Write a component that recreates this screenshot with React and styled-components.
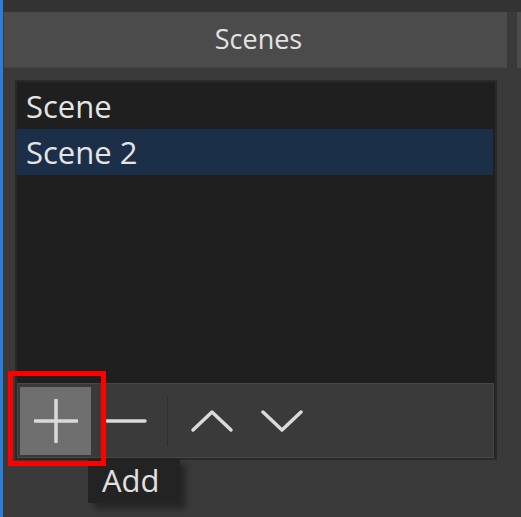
import React from 'react';
import styled, { createGlobalStyle } from 'styled-components';

const GlobalStyle = createGlobalStyle`
    body {
        margin: 0;
        background-color: #3a3a3a;
        font-family: "Open Sans", "Noto Sans", sans-serif;
        overflow: hidden;
    }
`;

const Window = styled.div`
    display: flex;
    width: 521px;
    height: 517px;
    background-color: #3a3a3a;
`;

const FocusEdge = styled.div`
    width: 3px;
    background-color: #2b7fd6;
    flex-shrink: 0;
`;

const Dock = styled.div`
    flex: 1;
    display: flex;
    flex-direction: column;
    padding-left: 1px;
`;

const TopStrip = styled.div`
    height: 12px;
    background-color: #333333;
    margin-left: -1px;
`;

const HeaderRow = styled.div`
    display: flex;
    gap: 10px;
    height: 56px;
`;

const DockTitle = styled.div`
    width: 503px;
    flex-shrink: 0;
    background-color: #4b4b4b;
    border-bottom: 1px solid #444;
    box-sizing: border-box;
    display: flex;
    align-items: center;
    justify-content: center;
    color: #e2e2e2;
    font-size: 27px;
    padding: 0 0 3px 6px;
`;

const NextTitle = styled.div`
    flex: 1;
    background-color: #4b4b4b;
`;

const Body = styled.div`
    padding: 12px 0 0 11px;
`;

const ListFrame = styled.div`
    width: 482px;
    height: 380px;
    box-sizing: border-box;
    border: 2px solid #2a2a2a;
    background-color: #1f1f1f;
    display: flex;
    flex-direction: column;
`;

const SceneList = styled.div`
    display: flex;
    flex-direction: column;
    padding-top: 1px;
`;

const SceneRow = styled.div`
    height: 46px;
    margin-right: 2px;
    padding-left: 9px;
    display: flex;
    align-items: center;
    font-size: 31px;
    color: #e4e4e4;
    background-color: ${p => (p.$selected ? '#1b3048' : 'transparent')};
`;

const Toolbar = styled.div`
    margin-top: auto;
    margin-right: 1px;
    height: 75px;
    box-sizing: border-box;
    border: 1px solid #474747;
    background-color: #3a3a3a;
    display: flex;
    align-items: center;
    padding-left: 2px;
`;

const ToolButton = styled.div`
    position: relative;
    width: ${p => (p.$wide ? '70px' : '71px')};
    height: 68px;
    display: flex;
    align-items: center;
    justify-content: center;
    background-color: ${p => (p.$hover ? '#6f6f6f' : 'transparent')};
    color: #dadada;
`;

const Separator = styled.div`
    width: 1px;
    height: 50px;
    background-color: #2f2f2f;
    margin: 0 9px 0 6px;
`;

const Highlight = styled.div`
    position: absolute;
    left: -12px;
    top: -16px;
    width: 98px;
    height: 95px;
    box-sizing: border-box;
    border: 5px solid #ff0000;
    z-index: 2;
`;

const Tooltip = styled.div`
    position: absolute;
    left: 68px;
    top: 71px;
    width: 92px;
    height: 45px;
    background-color: #232323;
    box-shadow: 6px 6px 6px rgba(0, 0, 0, 0.35);
    color: #e0e0e0;
    font-size: 31px;
    display: flex;
    align-items: center;
    padding-left: 14px;
    box-sizing: border-box;
    z-index: 1;
`;

const Icon = ({ children, w = 44, h = 44 }) => (
    <svg width={w} height={h} viewBox={`0 0 ${w} ${h}`} fill="none" stroke="currentColor" strokeWidth="3.5" strokeLinecap="round" strokeLinejoin="round">
        {children}
    </svg>
);

function App() {
    return (
        <>
            <GlobalStyle />
            <Window>
                <FocusEdge />
                <Dock>
                    <TopStrip />
                    <HeaderRow>
                        <DockTitle>Scenes</DockTitle>
                        <NextTitle />
                    </HeaderRow>
                    <Body>
                        <ListFrame>
                            <SceneList>
                                <SceneRow>Scene</SceneRow>
                                <SceneRow $selected>Scene 2</SceneRow>
                            </SceneList>
                            <Toolbar>
                                <ToolButton $hover>
                                    <Icon>
                                        <path d="M22 1V43M1 22H43" />
                                    </Icon>
                                    <Highlight />
                                    <Tooltip>Add</Tooltip>
                                </ToolButton>
                                <ToolButton $wide>
                                    <Icon w={42} h={10}>
                                        <path d="M2 5H40" />
                                    </Icon>
                                </ToolButton>
                                <Separator />
                                <ToolButton $wide>
                                    <Icon w={44} h={24}>
                                        <path d="M3 21L22 3L41 21" />
                                    </Icon>
                                </ToolButton>
                                <ToolButton $wide>
                                    <Icon w={42} h={24}>
                                        <path d="M2 3L21 21L40 3" />
                                    </Icon>
                                </ToolButton>
                            </Toolbar>
                        </ListFrame>
                    </Body>
                </Dock>
            </Window>
        </>
    );
}

export default App;
